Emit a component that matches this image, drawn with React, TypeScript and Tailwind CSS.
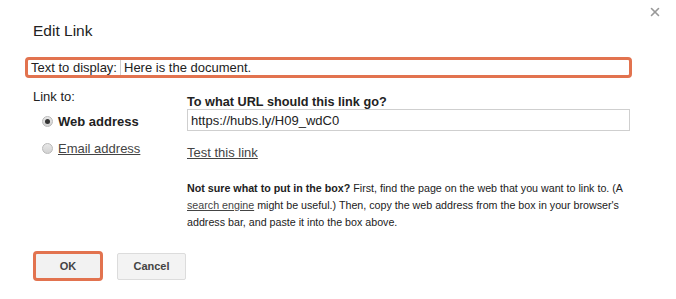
import { X } from "lucide-react";

function Radio({ checked }: { checked?: boolean }) {
  return (
    <span className="w-[11px] h-[11px] rounded-full border border-[#b9b9b9] bg-gradient-to-b from-[#e8e8e8] to-[#d2d2d2] flex items-center justify-center shrink-0">
      {checked && <span className="w-[5px] h-[5px] rounded-full bg-[#333]" />}
    </span>
  );
}

export default function App() {
  return (
    <div className="w-[676px] h-[299px] bg-white relative text-[#222] font-['Liberation_Sans',Arial,sans-serif] overflow-hidden">
      <button className="absolute right-[14px] top-[5px] text-[#999]">
        <X size={14} strokeWidth={2.75} />
      </button>

      <h1 className="pl-[33px] pt-[22px] text-[15.5px] leading-[18px]">Edit Link</h1>

      <div className="ml-[25px] mt-[17px] w-[607px] h-[21px] border-[3px] border-[#e2734f] rounded-[4px] flex items-center text-[13px] leading-[15px]">
        <span className="pl-[3px] pr-[3px]">Text to display:</span>
        <div className="flex-1 h-full border-l border-[#cfcfcf] pl-[3px] flex items-center">
          Here is the document.
        </div>
      </div>

      <div className="flex mt-[9px]">
        <div className="w-[187px] pl-[33px] text-[13px] leading-[15px]">
          <div className="pt-[2px]">Link to:</div>
          <label className="flex items-center gap-[5px] mt-[10px] pl-[9px]">
            <Radio checked />
            <span className="font-bold">Web address</span>
          </label>
          <label className="flex items-center gap-[5px] mt-[12px] pl-[9px]">
            <Radio />
            <span className="underline text-[#444]">Email address</span>
          </label>
        </div>

        <div className="w-[443px] text-[13px] leading-[15px]">
          <div className="font-bold pt-[8px] text-[12.7px] leading-[14px]">To what URL should this link go?</div>
          <div className="mt-0 h-[22px] border border-[#cfcfcf] flex items-center pl-[3px]">
            https://hubs.ly/H09_wdC0
          </div>
          <div className="mt-[14px] underline text-[#444]">Test this link</div>
          <p className="mt-[20px] text-[10.7px] leading-[17px] text-[#222]">
            <b>Not sure what to put in the box?</b> First, find the page on the web that you want to link to. (A{" "}
            <span className="underline text-[#444]">search engine</span> might be useful.) Then, copy the web address from the box in your browser's address bar, and paste it into the box above.
          </p>
        </div>
      </div>

      <div className="flex items-center gap-[14px] pl-[33px] mt-[20px]">
        <button className="w-[70px] h-[30px] border-[3px] border-[#e2734f] rounded-[4px] bg-[#f2f2f2] text-[11px] font-bold text-[#444]">
          OK
        </button>
        <button className="w-[69px] h-[27px] border border-[#dcdcdc] rounded-[2px] bg-[#f3f3f3] text-[11px] font-bold text-[#444]">
          Cancel
        </button>
      </div>
    </div>
  );
}
